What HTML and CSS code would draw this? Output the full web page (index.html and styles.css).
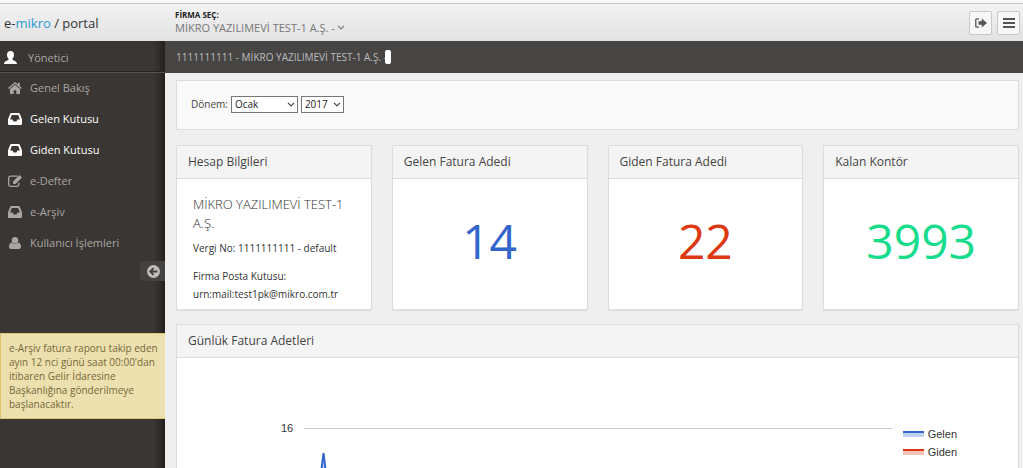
FILE: index.html
```html
<!DOCTYPE html>
<html lang="tr">
<head>
<meta charset="utf-8">
<title>e-mikro / portal</title>
<link rel="stylesheet" href="styles.css">
</head>
<body>
<svg class="sprite" aria-hidden="true">
  <symbol id="inbox" viewBox="0 0 14 12"><path fill-rule="evenodd" d="M3.2 0h7.6q.7 0 1 .7L14 6.300V11q0 1-1 1H1q-1 0-1-1V6.300L2.200.7q.3-.7 1-.7zM3.800 2 2.100 6.500h2.500l.9 2h3l.9-2h2.500L10.200 2z"/></symbol>
  <symbol id="chevron" viewBox="0 0 8 5"><path d="M1 .8 4 3.800 7 .8" fill="none" stroke="currentColor" stroke-width="1.200"/></symbol>
</svg>
<header class="topbar">
  <a class="brand" href="#">e-<span class="brand-accent">mikro</span> / portal</a>
  <div class="company">
    <span class="company-label" id="company-label">FİRMA SEÇ:</span>
    <button class="company-button" type="button" aria-labelledby="company-label company-name"><span id="company-name">MİKRO YAZILIMEVİ TEST-1 A.Ş. -</span><svg class="chevron"><use href="#chevron"/></svg></button>
  </div>
  <div class="actions">
    <button class="action" type="button" aria-label="Çıkış"><svg width="12" height="10" viewBox="0 0 12 10"><path d="M4 .8H2Q.8.800.8 2v6q0 1.200 1.200 1.200h2" fill="none" stroke="currentColor" stroke-width="1.300"/><path d="M3.500 3.200h3.200V.6L12 5 6.700 9.400V6.800H3.500z" fill="currentColor"/></svg></button>
    <button class="action" type="button" aria-label="Menü"><svg width="12" height="10" viewBox="0 0 12 10"><path d="M0 1h12M0 5h12M0 9h12" stroke="currentColor" stroke-width="2"/></svg></button>
  </div>
</header>
<div class="layout">
  <aside class="sidebar">
    <a class="user" href="#"><svg class="user-icon" viewBox="0 0 13 13"><path d="M6.500 0C8.800 0 10 1.500 10 3.700c0 1.700-.6 3.100-1.500 3.900v1.200c.5.800 4.500 1.200 4.500 4.200H0c0-3 4-3.400 4.500-4.200V7.600C3.600 6.800 3 5.400 3 3.700 3 1.500 4.200 0 6.500 0z"/></svg>Yönetici</a>
    <nav class="menu">
      <a class="menu-item" href="#"><svg class="icon" viewBox="0 0 14 12"><path d="M7 2.800 12 7v4.200q0 .8-.8.800H8.300V8.300H5.700V12H2.800Q2 12 2 11.200V7zM7 0l2.800 2.400V.8h1.900V4L14 6l-.8.900L7 1.700.8 6.900 0 6z"/></svg>Genel Bakış</a>
      <a class="menu-item is-active" href="#"><svg class="icon"><use href="#inbox"/></svg>Gelen Kutusu</a>
      <a class="menu-item is-active" href="#"><svg class="icon"><use href="#inbox"/></svg>Giden Kutusu</a>
      <a class="menu-item" href="#"><svg class="icon" viewBox="0 0 14 12"><path d="M9.500 1.200h-7Q.7 1.200.7 3v6.500q0 1.800 1.800 1.800H9q1.800 0 1.800-1.800V7.800" fill="none" stroke="currentColor" stroke-width="1.300"/><path d="M11.500 0 14 2.500 7.500 9H5V6.500z"/></svg>e-Defter</a>
      <a class="menu-item" href="#"><svg class="icon"><use href="#inbox"/></svg>e-Arşiv</a>
      <a class="menu-item" href="#"><svg class="icon" viewBox="0 0 14 12"><circle cx="7" cy="3.200" r="3.200"/><path d="M3.800 5.500Q7 8 10.200 5.500 13 6 13 10q0 2-2 2H3q-2 0-2-2 0-4 2.800-4.500z"/></svg>Kullanıcı İşlemleri</a>
    </nav>
    <button class="collapse" type="button" aria-label="Menüyü daralt"><svg width="13" height="13" viewBox="0 0 13 13"><circle cx="6.500" cy="6.500" r="6.500" fill="currentColor"/><path d="M10.500 6.500H3.500M6.600 3.100 3.200 6.500 6.600 9.900" fill="none" stroke="#444240" stroke-width="1.800"/></svg></button>
    <p class="notice">e-Arşiv fatura raporu takip eden ayın 12 nci günü saat 00:00'dan itibaren Gelir İdaresine Başkanlığına gönderilmeye başlanacaktır.</p>
  </aside>
  <main class="main">
    <div class="crumbs">1111111111 - MİKRO YAZILIMEVİ TEST-1 A.Ş. -<span class="crumb-mark"></span></div>
    <div class="content">
      <form class="filter">
        <label for="month">Dönem:</label>
        <span class="picker"><select class="month" id="month"><option>Ocak</option></select><svg class="chevron"><use href="#chevron"/></svg></span>
        <span class="picker"><select class="year" aria-label="Yıl"><option>2017</option></select><svg class="chevron"><use href="#chevron"/></svg></span>
      </form>
      <div class="cards">
        <section class="card">
          <h2 class="card-title">Hesap Bilgileri</h2>
          <div class="account">
            <h3 class="account-name">MİKRO YAZILIMEVİ TEST-1 A.Ş.</h3>
            <p class="account-line">Vergi No: 1111111111 - default</p>
            <p class="account-line">Firma Posta Kutusu: urn:mail:test1pk@mikro.com.tr</p>
          </div>
        </section>
        <section class="card">
          <h2 class="card-title">Gelen Fatura Adedi</h2>
          <div class="figure figure-blue">14</div>
        </section>
        <section class="card">
          <h2 class="card-title">Giden Fatura Adedi</h2>
          <div class="figure figure-red">22</div>
        </section>
        <section class="card">
          <h2 class="card-title">Kalan Kontör</h2>
          <div class="figure figure-green">3993</div>
        </section>
      </div>
      <section class="card">
        <h2 class="card-title">Günlük Fatura Adetleri</h2>
        <div class="chart">
          <span class="tick">16</span>
          <div class="plot"><svg class="series" viewBox="0 0 40 180"><path d="M0 180 19.500 24 39 180z" fill="#c1d1f0"/><path d="M0 180 19.500 24 39 180" fill="none" stroke="#3366cc" stroke-width="2"/></svg></div>
          <ul class="legend">
            <li class="legend-item"><span class="swatch swatch-blue"></span>Gelen</li>
            <li class="legend-item"><span class="swatch swatch-red"></span>Giden</li>
          </ul>
        </div>
      </section>
    </div>
  </main>
</div>
</body>
</html>
```

FILE: styles.css
```css
* { box-sizing: border-box; }
body {
  margin: 0;
  height: 100vh;
  display: flex;
  flex-direction: column;
  overflow: hidden;
  background: #efefef;
  color: #444;
  font-family: "Open Sans", "Noto Sans", sans-serif;
  font-size: 11px;
  border-top: 3px solid #f8f8f8;
}
a { color: inherit; text-decoration: none; }
button { font: inherit; cursor: pointer; }
h2, h3, p, ul { margin: 0; padding: 0; font-weight: 400; }
.sprite { position: absolute; width: 0; height: 0; }
.chevron { width: 8px; height: 5px; flex: none; }

.topbar {
  display: flex;
  align-items: center;
  flex: none;
  height: 38px;
  border-top: 1px solid #c4c4c4;
  background: linear-gradient(#f3f3f3, #e2e2e2);
}
.brand { width: 175px; flex: none; padding-left: 4px; font-size: 13px; color: #333; }
.brand-accent { color: #2a9bd6; }
.company { flex: 1; padding-bottom: 2px; line-height: 12px; }
.company-label { display: block; font-size: 8px; font-weight: 700; color: #222; }
.company-button {
  display: flex;
  align-items: center;
  gap: 2px;
  padding: 0;
  border: 0;
  background: none;
  color: #777;
  line-height: 14px;
}
.actions { display: flex; gap: 5px; padding-right: 3px; }
.action {
  display: flex;
  align-items: center;
  justify-content: center;
  width: 23px;
  height: 24px;
  padding: 0;
  border: 1px solid #c8c8c8;
  border-radius: 2px;
  background: #f7f7f7;
  color: #555;
}

.layout { display: flex; flex: 1; min-height: 0; }
.sidebar {
  display: flex;
  flex-direction: column;
  flex: none;
  width: 165px;
  background: linear-gradient(to left, #23201e, #3a3633 11px);
  color: #a9a6a3;
}
.user {
  display: flex;
  align-items: center;
  gap: 11px;
  height: 31px;
  padding: 2px 4px 0;
  border-bottom: 1px solid #24211f;
  box-shadow: 0 1px #55514e;
}
.user-icon { width: 13px; height: 13px; fill: #fff; }
.menu { display: flex; flex-direction: column; font-size: 11px; }
.menu-item { display: flex; align-items: center; gap: 8px; height: 31px; padding-left: 8px; }
.is-active { color: #fff; }
.icon { width: 14px; height: 12px; fill: currentColor; }
.collapse {
  display: flex;
  align-items: center;
  align-self: flex-end;
  width: 25px;
  height: 20px;
  margin-top: 3px;
  padding: 0 5px 0 7px;
  border: 0;
  border-radius: 4px 0 0 4px;
  background: #444240;
  color: #c0bebc;
}
.notice {
  margin-top: 52px;
  padding: 7px 6px 7px 8px;
  border: 1px solid #dfc66e;
  border-width: 1px 0 1px 1px;
  background: #ece0af;
  color: #77683a;
  font-size: 10px;
  line-height: 14px;
}

.main { flex: 1; min-width: 0; overflow: hidden; }
.crumbs {
  display: flex;
  align-items: center;
  height: 32px;
  padding-left: 11px;
  background: #474544;
  color: #bbb;
  font-size: 10px;
}
.crumb-mark { width: 6px; height: 14px; margin-left: -2px; border-radius: 2px; background: #fff; }
.content { display: flex; flex-direction: column; gap: 14px; padding: 7px 4px 0 11px; }
.filter {
  display: flex;
  align-items: center;
  gap: 3px;
  height: 50px;
  margin-bottom: 1px;
  padding: 0 14px 2px;
  border: 1px solid #ddd;
  background: #fafafa;
  font-size: 10px;
}
.picker { display: grid; align-items: center; }
.picker > * { grid-area: 1 / 1; }
.picker .chevron { justify-self: end; margin-right: 3px; color: #444; pointer-events: none; }
.month, .year {
  appearance: none;
  height: 17px;
  padding: 0 3px;
  border: 1px solid #777;
  border-radius: 0;
  background: #fff;
  color: #222;
  font: inherit;
  line-height: 15px;
}
.month { width: 67px; }
.year { width: 43px; }
.cards { display: grid; grid-template-columns: repeat(4, 1fr); gap: 20px; }
.card {
  display: flex;
  flex-direction: column;
  min-width: 0;
  border: 1px solid #dcdcdc;
  background: #fff;
  box-shadow: 0 1px 1px #e2e2e2;
}
.card-title {
  height: 33px;
  padding-left: 11px;
  border-bottom: 1px solid #ddd;
  background: #f4f4f4;
  font-size: 12px;
  line-height: 32px;
}
.account { height: 130px; padding: 16px; color: #333; }
.account-name { color: #333; font-size: 13px; font-weight: 300; line-height: 19px; }
.account-line { margin-top: 6px; font-size: 10px; line-height: 18px; }
.account-line + .account-line { margin-top: 10px; }
.figure { display: grid; place-items: center; flex: 1; padding-bottom: 8px; font-size: 48px; }
.figure-blue { color: #3366cc; }
.figure-red { color: #dc3912; }
.figure-green { color: #16dc8c; }
.chart {
  display: flex;
  align-items: flex-start;
  gap: 11px;
  padding: 63px 61px 0 104px;
  color: #333;
  font-family: "Liberation Sans", Arial, sans-serif;
  font-size: 11px;
  line-height: 14px;
}
.plot { flex: 1; margin-top: 7px; border-top: 1px solid #ccc; }
.series { display: block; width: 40px; height: 180px; }
.legend { list-style: none; padding-top: 4px; }
.legend-item { display: flex; align-items: center; gap: 4px; height: 18px; }
.swatch { width: 21px; height: 6px; border-top: 2px solid; }
.swatch-blue { border-color: #3366cc; background: #c1d1f0; }
.swatch-red { border-color: #dc3912; background: #f5c3b8; }
```
